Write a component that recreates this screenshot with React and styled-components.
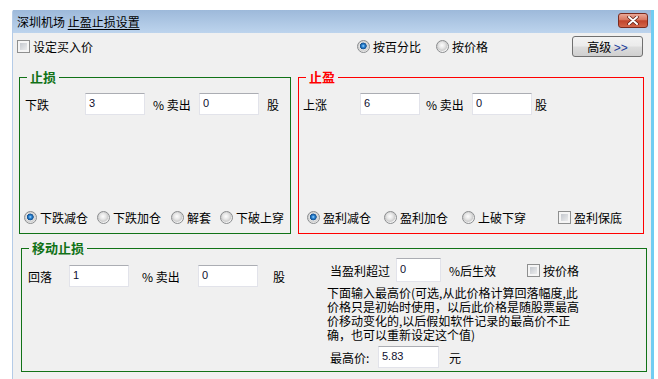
import React from 'react';
import styled, { createGlobalStyle } from 'styled-components';

const GlobalStyle = createGlobalStyle`
  html, body {
    margin: 0;
    padding: 0;
    background: #fff;
  }
  body {
    font-family: "Noto Sans CJK SC", "Noto Sans", sans-serif;
    font-size: 12px;
    color: #000;
  }
`;

const GREEN = '#117217';
const RED = '#ff0000';

const Window = styled.div`
  margin: 10px 0 0 12px;
  width: 642px;
  height: 380px;
  box-sizing: border-box;
  border-left: 1px solid #b4cbe7;
  border-right: 3px solid #71cdf2;
  border-top-left-radius: 2px;
  background: #f0f0f0;
  display: flex;
  flex-direction: column;
`;

const TitleBar = styled.div`
  height: 23px;
  flex-shrink: 0;
  display: flex;
  align-items: flex-start;
  justify-content: space-between;
  padding: 0 3px 0 4px;
  background: linear-gradient(#9db9da, #bdd4ed);
`;

const Title = styled.div`
  line-height: 23px;
  white-space: nowrap;
  u {
    text-underline-offset: 2px;
  }
`;

const CloseButton = styled.div`
  margin-top: 3px;
  width: 30px;
  height: 15px;
  box-sizing: border-box;
  border: 1px solid #7a2b1f;
  border-radius: 3px;
  background: linear-gradient(#eaa898 0%, #d8765f 45%, #c1442b 52%, #d3664a 100%);
  display: flex;
  align-items: center;
  justify-content: center;
`;

const Body = styled.div`
  padding-top: 3px;
  display: flex;
  flex-direction: column;
`;

const TopRow = styled.div`
  display: grid;
  grid-template-columns: 340px 215px 71px;
  align-items: center;
  height: 21px;
  padding-left: 4px;
`;

const Option = styled.label`
  display: inline-flex;
  align-items: center;
  gap: 3px;
  margin-left: ${(p) => p.$ml || 0}px;
  white-space: nowrap;
  flex-shrink: 0;
`;

const RadioMark = styled.span`
  width: 13px;
  height: 13px;
  box-sizing: border-box;
  border-radius: 50%;
  border: 1px solid #8a8c8e;
  flex-shrink: 0;
  background: ${(p) =>
    p.$on
      ? 'radial-gradient(circle at 48% 45%, #a6dcff 0, #2f88d8 1.4px, #13508f 3.1px, #e4e4e4 3.7px, #d0d0d0 5px, #f3f3f3 6px)'
      : 'radial-gradient(circle at 45% 40%, #fdfdfd 0, #e6e6e6 3px, #cdcdcd 5px, #f3f3f3 6px)'};
`;

const CheckMark = styled.span`
  width: 13px;
  height: 13px;
  box-sizing: border-box;
  border: 1px solid #8e8f8f;
  flex-shrink: 0;
  background: linear-gradient(135deg, #b9bec5, #f6f6f6);
  box-shadow: inset 0 0 0 2px #f5f5f5;
`;

const AdvancedButton = styled.button`
  width: 71px;
  height: 21px;
  margin: 0;
  padding: 0;
  box-sizing: border-box;
  border: 1px solid #707070;
  border-radius: 3px;
  background: linear-gradient(#f3f3f3 0%, #ebebeb 48%, #dddddd 52%, #cfcfcf 100%);
  font-family: "Noto Sans CJK SC", sans-serif;
  font-size: 12px;
  color: #000;
  span {
    font-family: "Liberation Sans", Arial, sans-serif;
    color: #1b3c9c;
  }
`;

const GroupsRow = styled.div`
  display: flex;
  gap: 7px;
  margin-top: 13px;
  padding-left: 6px;
`;

const Group = styled.fieldset`
  margin: ${(p) => p.$margin || 0};
  padding: 0;
  min-width: 0;
  width: ${(p) => p.$w}px;
  box-sizing: border-box;
  border: 1px solid ${(p) => p.$color};
`;

const Legend = styled.legend`
  margin-left: 7px;
  padding: 0 3px;
  font-size: 13px;
  line-height: 14px;
  font-weight: bold;
  color: ${(p) => p.$color};
`;

const StopBody = styled.div`
  height: 149px;
  box-sizing: border-box;
  display: flex;
  flex-direction: column;
  justify-content: space-between;
  padding: 9px 0 7px;
`;

const Row = styled.div`
  display: flex;
  align-items: center;
  padding-left: ${(p) => p.$pl || 0}px;
  margin-top: ${(p) => p.$mt || 0}px;
`;

const Text = styled.span`
  flex-shrink: 0;
  white-space: nowrap;
  width: ${(p) => (p.$w ? `${p.$w}px` : 'auto')};
  margin-left: ${(p) => p.$ml || 0}px;
`;

const Field = styled.input.attrs({ type: 'text', readOnly: true })`
  width: ${(p) => p.$w || 60}px;
  height: ${(p) => p.$h || 22}px;
  box-sizing: border-box;
  margin: 0;
  padding: 0 3px 3px;
  border: 1px solid #e2e3ea;
  border-top-color: #abadb3;
  background: #fff;
  font-family: "Liberation Sans", Arial, sans-serif;
  font-size: 11px;
  color: #101030;
  outline: none;
  flex-shrink: 0;
`;

const TrailBody = styled.div`
  display: grid;
  grid-template-columns: 305px 1fr;
  padding-bottom: 3px;
`;

const TrailLeft = styled.div`
  padding: 10px 0 0 6px;
`;

const TrailRight = styled.div`
  padding-top: 3px;
`;

const Note = styled.p`
  margin: 4px 0 0;
  line-height: 14px;
  white-space: nowrap;
`;

const Radio = ({ on, label, ml }) => (
  <Option $ml={ml}>
    <RadioMark $on={on} />
    {label}
  </Option>
);

const Check = ({ label, ml }) => (
  <Option $ml={ml}>
    <CheckMark />
    {label}
  </Option>
);

const CloseIcon = () => (
  <svg width="12" height="9" viewBox="0 0 12 9">
    <path d="M2 1 L10 8 M10 1 L2 8" stroke="#5a1a10" strokeWidth="3.4" strokeLinecap="round" />
    <path d="M2 1 L10 8 M10 1 L2 8" stroke="#fff" strokeWidth="2" strokeLinecap="round" />
  </svg>
);

export default function App() {
  return (
    <>
      <GlobalStyle />
      <Window>
        <TitleBar>
          <Title>
            深圳机场 <u>止盈止损设置</u>
          </Title>
          <CloseButton>
            <CloseIcon />
          </CloseButton>
        </TitleBar>
        <Body>
          <TopRow>
            <div>
              <Check label="设定买入价" />
            </div>
            <div>
              <Radio on label="按百分比" />
              <Radio label="按价格" ml={15} />
            </div>
            <AdvancedButton>
              高级 <span>&gt;&gt;</span>
            </AdvancedButton>
          </TopRow>

          <GroupsRow>
            <Group $w={272} $color={GREEN}>
              <Legend $color={GREEN}>止损</Legend>
              <StopBody>
                <Row $pl={5}>
                  <Text $w={60}>下跌</Text>
                  <Field defaultValue="3" />
                  <Text $ml={8} $w={46}>% 卖出</Text>
                  <Field defaultValue="0" />
                  <Text $ml={8}>股</Text>
                </Row>
                <Row $pl={4}>
                  <Radio on label="下跌减仓" />
                  <Radio label="下跌加仓" ml={9} />
                  <Radio label="解套" ml={10} />
                  <Radio label="下破上穿" ml={9} />
                </Row>
              </StopBody>
            </Group>

            <Group $w={346} $color={RED}>
              <Legend $color={RED}>止盈</Legend>
              <StopBody>
                <Row $pl={4}>
                  <Text $w={57}>上涨</Text>
                  <Field defaultValue="6" />
                  <Text $ml={6} $w={46}>% 卖出</Text>
                  <Field defaultValue="0" />
                  <Text $ml={3}>股</Text>
                </Row>
                <Row $pl={8}>
                  <Radio on label="盈利减仓" />
                  <Radio label="盈利加仓" ml={13} />
                  <Radio label="上破下穿" ml={14} />
                  <Check label="盈利保底" ml={32} />
                </Row>
              </StopBody>
            </Group>
          </GroupsRow>

          <Group $w={626} $color={GREEN} $margin="7px 0 0 8px">
            <Legend $color={GREEN}>移动止损</Legend>
            <TrailBody>
              <TrailLeft>
                <Row>
                  <Text $w={41}>回落</Text>
                  <Field defaultValue="1" />
                  <Text $ml={13} $w={56}>% 卖出</Text>
                  <Field defaultValue="0" />
                  <Text $ml={15}>股</Text>
                </Row>
              </TrailLeft>
              <TrailRight>
                <Row $pl={3}>
                  <Text $w={66}>当盈利超过</Text>
                  <Field $w={45} $h={24} defaultValue="0" />
                  <Text $ml={8} $w={78}>%后生效</Text>
                  <Check label="按价格" />
                </Row>
                <Note>
                  下面输入最高价(可选,从此价格计算回落幅度,此
                  <br />
                  价格只是初始时使用，以后此价格是随股票最高
                  <br />
                  价移动变化的,以后假如软件记录的最高价不正
                  <br />
                  确，也可以重新设定这个值)
                </Note>
                <Row $pl={3} $mt={4}>
                  <Text $w={48}>最高价:</Text>
                  <Field $w={61} defaultValue="5.83" />
                  <Text $ml={10}>元</Text>
                </Row>
              </TrailRight>
            </TrailBody>
          </Group>
        </Body>
      </Window>
    </>
  );
}
